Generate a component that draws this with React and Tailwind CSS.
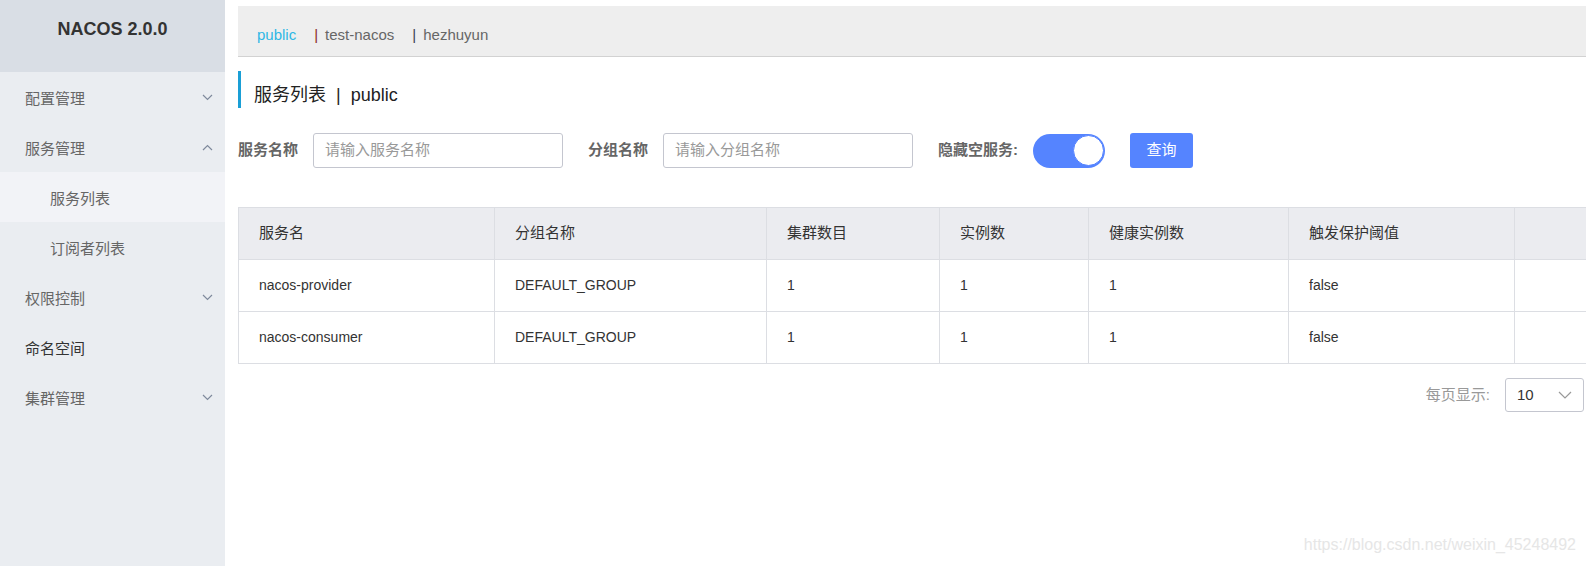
import React from 'react';

const Chevron = ({ up = false }) => (
  <svg width="11" height="7" viewBox="0 0 11 7" fill="none" className="shrink-0">
    <path
      d={up ? 'M1 6l4.5-4.5L10 6' : 'M1 1l4.5 4.5L10 1'}
      stroke="#7f8a9c"
      strokeWidth="1.2"
    />
  </svg>
);

const menu = [
  { label: '配置管理', arrow: 'down' },
  { label: '服务管理', arrow: 'up' },
  { label: '服务列表', sub: true, active: true },
  { label: '订阅者列表', sub: true },
  { label: '权限控制', arrow: 'down' },
  { label: '命名空间', dark: true },
  { label: '集群管理', arrow: 'down' },
];

const columns = [
  { title: '服务名', width: 256 },
  { title: '分组名称', width: 272 },
  { title: '集群数目', width: 173 },
  { title: '实例数', width: 149 },
  { title: '健康实例数', width: 200 },
  { title: '触发保护阈值', width: 226 },
  { title: '', width: 200 },
];

const rows = [
  ['nacos-provider', 'DEFAULT_GROUP', '1', '1', '1', 'false', ''],
  ['nacos-consumer', 'DEFAULT_GROUP', '1', '1', '1', 'false', ''],
];

const App = () => {
  return (
    <div className="relative flex w-[1586px] h-[566px] overflow-hidden bg-white font-['Liberation_Sans','Noto_Sans_CJK_SC',sans-serif]">
      {/* Sidebar */}
      <aside className="w-[225px] shrink-0 bg-[#eaedf1]">
        <div className="h-[72px] bg-[#d9dee5] pt-[15px] text-center text-[18px] leading-[28px] font-bold text-[#333]">
          NACOS 2.0.0
        </div>
        <ul>
          {menu.map(item => (
            <li
              key={item.label}
              className={`h-[50px] flex items-center justify-between pr-[12px] text-[15px] ${
                item.sub ? 'pl-[50px]' : 'pl-[25px]'
              } ${item.active ? 'bg-[#f2f3f7]' : ''} ${item.dark ? 'text-[#333]' : 'text-[#666]'}`}
            >
              <span className="pt-[5px]">{item.label}</span>
              {item.arrow && <Chevron up={item.arrow === 'up'} />}
            </li>
          ))}
        </ul>
      </aside>

      {/* Main */}
      <main className="flex-1 min-w-0 pl-[13px] pt-[6px]">
        <div className="h-[51px] flex items-center pl-[19px] pt-[8px] bg-[#eeeeee] border-b border-[#d2d2d2] text-[15px]">
          <span className="text-[#2fb7e5]">public</span>
          <span className="ml-[18px] text-[#666]">
            <span className="text-[#8b2d1f]">|</span>
            <span className="ml-[7px]">test-nacos</span>
          </span>
          <span className="ml-[18px] text-[#666]">
            <span className="text-[#3a4150]">|</span>
            <span className="ml-[7px]">hezhuyun</span>
          </span>
        </div>

        <div className="mt-[14px] h-[37px] flex items-center border-l-[3px] border-[#1a9fd6] pl-[13px] pt-[11px] text-[18px] text-[#222]">
          <span>服务列表</span>
          <span className="mx-[10px]">|</span>
          <span>public</span>
        </div>

        <div className="mt-[25px] flex items-center text-[15px]">
          <span className="font-bold text-[#666]">服务名称</span>
          <div className="ml-[15px] w-[250px] h-[35px] flex items-center pl-[11px] border border-[#c4c6cf] rounded-[3px] text-[#999]">
            请输入服务名称
          </div>
          <span className="ml-[25px] font-bold text-[#666]">分组名称</span>
          <div className="ml-[15px] w-[250px] h-[35px] flex items-center pl-[11px] border border-[#c4c6cf] rounded-[3px] text-[#999]">
            请输入分组名称
          </div>
          <span className="ml-[25px] font-bold text-[#666]">隐藏空服务:</span>
          <div className="ml-[15px] w-[72px] h-[34px] flex items-center justify-end pr-[1px] rounded-full bg-[#5584ff]">
            <div className="w-[31px] h-[31px] rounded-full bg-white border border-[#5584ff]" />
          </div>
          <button className="ml-[25px] w-[63px] h-[35px] rounded-[3px] bg-[#5584ff] text-white text-[15px]">
            查询
          </button>
        </div>

        <div className="mt-[39px] w-[1476px]">
          <table className="table-fixed border-collapse w-[1476px]">
            <colgroup>
              {columns.map((c, i) => (
                <col key={i} style={{ width: c.width }} />
              ))}
            </colgroup>
            <thead>
              <tr className="bg-[#ebecf0]">
                {columns.map((c, i) => (
                  <th
                    key={i}
                    className="h-[52px] border border-[#dcdee3] pl-[20px] text-left font-normal text-[15px] text-[#333]"
                  >
                    {c.title}
                  </th>
                ))}
              </tr>
            </thead>
            <tbody>
              {rows.map((r, ri) => (
                <tr key={ri}>
                  {r.map((cell, ci) => (
                    <td
                      key={ci}
                      className="h-[52px] border border-[#dcdee3] pl-[20px] text-[14px] text-[#333]"
                    >
                      {cell}
                    </td>
                  ))}
                </tr>
              ))}
            </tbody>
          </table>
        </div>

        <div className="mt-[14px] flex items-center justify-end pr-[2px] text-[15px]">
          <span className="text-[#999]">每页显示:</span>
          <div className="ml-[15px] w-[79px] h-[34px] flex items-center justify-between pl-[11px] pr-[11px] border border-[#c4c6cf] rounded-[3px] text-[#333]">
            <span>10</span>
            <svg width="14" height="8" viewBox="0 0 14 8" fill="none">
              <path d="M1 1l6 6 6-6" stroke="#999" strokeWidth="1.2" />
            </svg>
          </div>
        </div>
      </main>

      <div className="absolute right-[10px] bottom-[9px] text-[16px] text-[#e6e6e6] font-['Liberation_Sans',sans-serif]">
        https://blog.csdn.net/weixin_45248492
      </div>
    </div>
  );
};

export default App;
